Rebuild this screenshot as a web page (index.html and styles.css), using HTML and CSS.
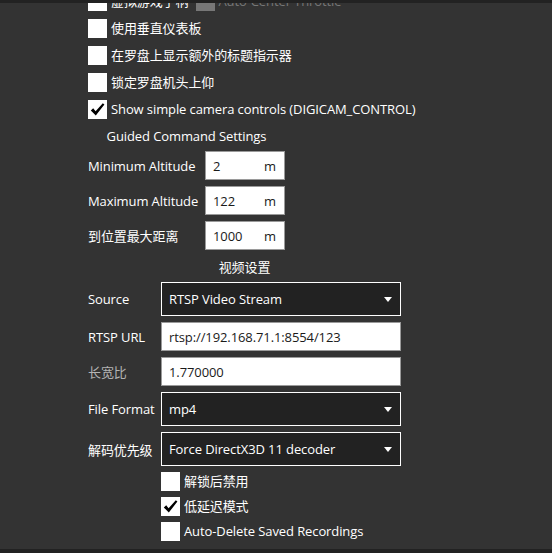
FILE: index.html
```html
<!DOCTYPE html>
<html lang="zh">
<head>
<meta charset="utf-8">
<title>Settings</title>
<link rel="stylesheet" href="styles.css">
</head>
<body>
<div class="topbar"></div>
<div class="page">
  <div class="checks">
    <div class="row">
      <span class="box"></span><span class="lbl">虚拟游戏手柄</span>
      <span class="box disabled"></span><span class="lbl dim">Auto-Center Throttle</span>
    </div>
    <div class="row"><span class="box"></span><span class="lbl">使用垂直仪表板</span></div>
    <div class="row"><span class="box"></span><span class="lbl">在罗盘上显示额外的标题指示器</span></div>
    <div class="row"><span class="box"></span><span class="lbl">锁定罗盘机头上仰</span></div>
    <div class="row"><span class="box checked"><svg viewBox="0 0 19 19" width="19" height="19"><path d="M2.8 10.4 L5.2 8.2 L7.6 11.2 L14.8 3.2 L16.4 4.6 L7.8 15.6 Z" fill="#000"/></svg></span><span class="lbl">Show simple camera controls (DIGICAM_CONTROL)</span></div>
  </div>

  <div class="section guided">
    <div class="heading">Guided Command Settings</div>
    <div class="grid g1">
      <span class="flabel">Minimum Altitude</span>
      <div class="field short"><span>2</span><span>m</span></div>
      <span class="flabel">Maximum Altitude</span>
      <div class="field short"><span>122</span><span>m</span></div>
      <span class="flabel">到位置最大距离</span>
      <div class="field short"><span>1000</span><span>m</span></div>
    </div>
  </div>

  <div class="section video">
    <div class="heading">视频设置</div>
    <div class="grid g2">
      <span class="flabel">Source</span>
      <div class="combo"><span>RTSP Video Stream</span><span class="arrow"></span></div>
      <span class="flabel">RTSP URL</span>
      <div class="field wide"><span>rtsp://192.168.71.1:8554/123</span></div>
      <span class="flabel dim2">长宽比</span>
      <div class="field wide"><span>1.770000</span></div>
      <span class="flabel">File Format</span>
      <div class="combo"><span>mp4</span><span class="arrow"></span></div>
      <span class="flabel">解码优先级</span>
      <div class="combo"><span>Force DirectX3D 11 decoder</span><span class="arrow"></span></div>
      <span></span>
      <div class="subchecks">
        <div class="row"><span class="box"></span><span class="lbl">解锁后禁用</span></div>
        <div class="row"><span class="box checked"><svg viewBox="0 0 19 19" width="19" height="19"><path d="M2.8 10.4 L5.2 8.2 L7.6 11.2 L14.8 3.2 L16.4 4.6 L7.8 15.6 Z" fill="#000"/></svg></span><span class="lbl">低延迟模式</span></div>
        <div class="row"><span class="box"></span><span class="lbl">Auto-Delete Saved Recordings</span></div>
      </div>
    </div>
  </div>
</div>
<div class="bottombar"></div>
</body>
</html>
```

FILE: styles.css
```css
html, body {
  margin: 0;
  padding: 0;
  height: 100%;
  overflow: hidden;
}
body {
  background: #333333;
  color: #ffffff;
  font-family: "Open Sans", "Noto Sans CJK SC", sans-serif;
  font-size: 13px;
  letter-spacing: -0.1px;
  position: relative;
}
.topbar {
  position: absolute;
  top: 0; left: 0; right: 0;
  height: 3px;
  background: #222222;
  z-index: 2;
}
.bottombar {
  position: absolute;
  bottom: 0; left: 0; right: 0;
  height: 4px;
  background: #222222;
  z-index: 2;
}
.page {
  margin-top: -8px;
  padding-left: 88px;
  display: flex;
  flex-direction: column;
}
.checks {
  display: flex;
  flex-direction: column;
  gap: 8px;
}
.row {
  display: flex;
  align-items: center;
  height: 19px;
  line-height: 19px;
  white-space: nowrap;
}
.box {
  width: 19px;
  height: 19px;
  background: #ffffff;
  flex: none;
  display: flex;
}
.box.disabled {
  background: #777777;
  margin-left: 8px;
}
.lbl {
  margin-left: 4px;
}
.lbl.dim {
  color: #777777;
  margin-left: 3px;
}
.section {
  display: flex;
  flex-direction: column;
  align-self: flex-start;
}
.heading {
  height: 18px;
  line-height: 18px;
  text-align: center;
}
.guided {
  margin-top: 8px;
}
.guided .heading {
  margin-bottom: 6px;
}
.video {
  margin-top: 8px;
}
.video .heading {
  margin-bottom: 6px;
}
.grid {
  display: grid;
  row-gap: 6px;
  align-items: center;
}
.g1 {
  grid-template-columns: 117px 80px;
}
.g2 {
  grid-template-columns: 73px 240px;
}
.flabel {
  white-space: nowrap;
}
.flabel.dim2 {
  color: #b4b4b4;
}
.field {
  box-sizing: border-box;
  height: 29px;
  background: #ffffff;
  border: 1px solid #9a9a9a;
  color: #1a1a1a;
  display: flex;
  align-items: center;
  justify-content: space-between;
  padding: 0 8px 0 7px;
  white-space: nowrap;
}
.combo {
  box-sizing: border-box;
  height: 34px;
  background: #222222;
  border: 1px solid #ffffff;
  color: #ffffff;
  display: flex;
  align-items: center;
  justify-content: space-between;
  padding: 0 7px 0 7px;
  white-space: nowrap;
}
.arrow {
  width: 0;
  height: 0;
  border-left: 4px solid transparent;
  border-right: 4px solid transparent;
  border-top: 5px solid #ffffff;
  margin-right: 1px;
}
.subchecks {
  display: flex;
  flex-direction: column;
  gap: 6px;
}
```
